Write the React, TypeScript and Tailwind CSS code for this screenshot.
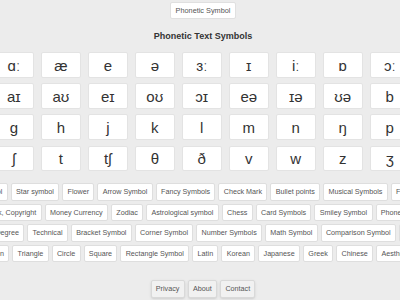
const symbols = [
  ['ɑː', 'æ', 'e', 'ə', 'ɜː', 'ɪ', 'iː', 'ɒ', 'ɔː', 'ʊ', 'uː'],
  ['aɪ', 'aʊ', 'eɪ', 'oʊ', 'ɔɪ', 'eə', 'ɪə', 'ʊə', 'b', 'd', 'f'],
  ['g', 'h', 'j', 'k', 'l', 'm', 'n', 'ŋ', 'p', 'r', 's'],
  ['ʃ', 't', 'tʃ', 'θ', 'ð', 'v', 'w', 'z', 'ʒ', 'dʒ', 'ʌ'],
]

const tagRows = [
  {
    offset: '-ml-[44.5px]',
    tags: ['Love Symbol', 'Star symbol', 'Flower', 'Arrow Symbol', 'Fancy Symbols', 'Check Mark', 'Bullet points', 'Musical Symbols', 'Flag Symbol'],
  },
  {
    offset: '-ml-[38.2px]',
    tags: ['Trademark, Copyright', 'Money Currency', 'Zodiac', 'Astrological symbol', 'Chess', 'Card Symbols', 'Smiley Symbol', 'Phone Symbol'],
  },
  {
    offset: '-ml-[9.9px]',
    tags: ['Degree', 'Technical', 'Bracket Symbol', 'Corner Symbol', 'Number Symbols', 'Math Symbol', 'Comparison Symbol', 'Fraction'],
  },
  {
    offset: '-ml-[19.3px]',
    tags: ['Moon', 'Triangle', 'Circle', 'Square', 'Rectangle Symbol', 'Latin', 'Korean', 'Japanese', 'Greek', 'Chinese', 'Aesthetic'],
  },
]

function Tag({ label }: { label: string }) {
  return (
    <a className="shrink-0 h-[17.3px] flex items-center px-[4.3px] bg-white border border-[#dedede] rounded-[2px] text-[7.2px] leading-none text-[#555]">
      {label}
    </a>
  )
}

export default function App() {
  return (
    <div className="w-[400px] h-[300px] overflow-hidden bg-[#ececec] font-['Liberation_Sans','DejaVu_Sans',sans-serif]">
      <header className="flex flex-col items-center pl-[6px] pt-[2px]">
        <button className="h-[17.3px] px-[5px] bg-white border border-[#e0e0e0] rounded-[2px] text-[7.3px] leading-none text-[#555]">
          Phonetic Symbol
        </button>
        <h1 className="mt-[10.7px] h-[12px] text-[9px] leading-[12px] font-bold text-[#333]">
          Phonetic Text Symbols
        </h1>
      </header>

      <div className="mt-[10.3px] -ml-[6.3px] grid grid-cols-[repeat(11,40.3px)] gap-x-[6.7px] gap-y-[5.4px]">
        {symbols.flat().map((s, i) => (
          <div
            key={i}
            className="h-[25.7px] flex items-center justify-center bg-white border border-[#e3e3e3] rounded-[2px] text-[15px] leading-none text-[#333]"
          >
            {s}
          </div>
        ))}
      </div>

      <div className="mt-[12px] flex flex-col gap-[3.3px]">
        {tagRows.map((row, i) => (
          <div key={i} className={`flex gap-[3px] whitespace-nowrap ${row.offset}`}>
            {row.tags.map(t => (
              <Tag key={t} label={t} />
            ))}
          </div>
        ))}
      </div>

      <footer className="mt-[17.9px] flex justify-center gap-[3px] pl-[6px]">
        {['Privacy', 'About', 'Contact'].map(l => (
          <a
            key={l}
            className="h-[17.7px] flex items-center px-[4.3px] bg-[#f1f1f1] border border-[#d9d9d9] rounded-[2px] shadow-sm text-[7.2px] leading-none text-[#555]"
          >
            {l}
          </a>
        ))}
      </footer>
    </div>
  )
}
